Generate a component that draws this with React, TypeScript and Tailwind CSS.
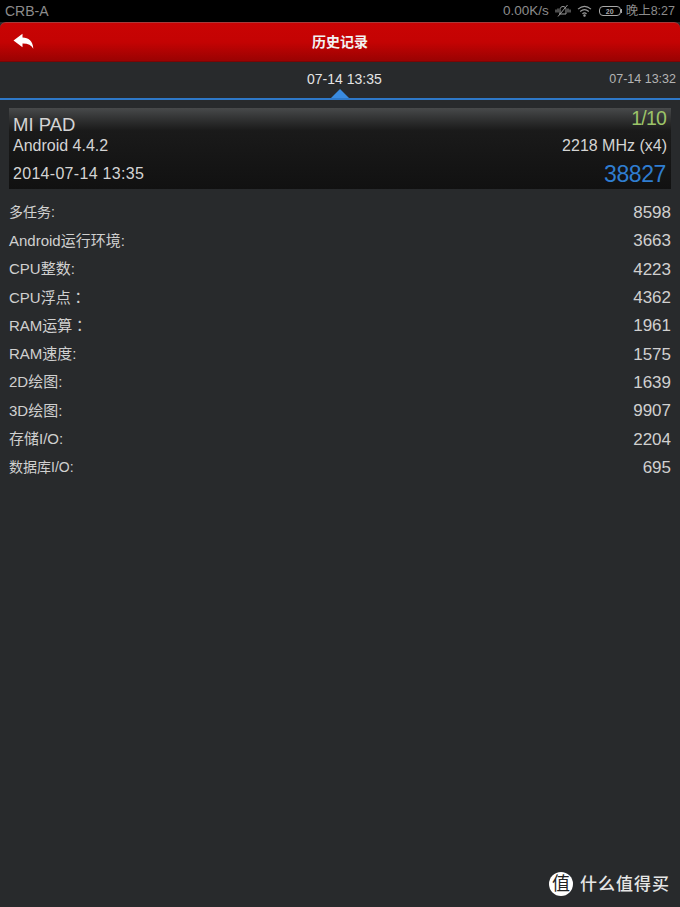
import { Fragment } from "react";

const font = "font-['Liberation_Sans','Noto_Sans_CJK_SC',sans-serif]";

const rows = [
  { label: "多任务:", value: "8598", small: true },
  { label: "Android运行环境:", value: "3663" },
  { label: "CPU整数:", value: "4223" },
  { label: "CPU浮点", value: "4362", colon: "：" },
  { label: "RAM运算", value: "1961", colon: "：" },
  { label: "RAM速度:", value: "1575" },
  { label: "2D绘图:", value: "1639" },
  { label: "3D绘图:", value: "9907" },
  { label: "存储I/O:", value: "2204" },
  { label: "数据库I/O:", value: "695", small: true },
];

function StatusIcons() {
  return (
    <div className="flex items-center">
      {/* muted */}
      <svg width="16" height="14" viewBox="0 0 16 14" fill="none" stroke="#9a9a9a" strokeWidth="1">
        <path d="M5 10V5.5C5 3.5 6.5 2.5 8 2.5s3 1 3 3V10H4" />
        <path d="M3 12.5L12.5 1" />
        <path d="M1 5.5v3M3 4.5v4M13 4.5v4M15 5.5v3" />
      </svg>
      {/* wifi */}
      <svg className="ml-[6px]" width="15" height="12" viewBox="0 0 15 12" fill="none" stroke="#9a9a9a" strokeWidth="1.1">
        <path d="M1 4.2C5 .8 10 .8 14 4.2" />
        <path d="M3.2 6.5c2.6-2.2 6-2.2 8.6 0" />
        <path d="M5.4 8.7c1.3-1 2.9-1 4.2 0" />
        <circle cx="7.5" cy="10.6" r=".7" fill="#9a9a9a" />
      </svg>
      {/* battery */}
      <div className="ml-[7px] flex items-center">
        <div className="flex h-[10px] w-[22px] items-center justify-center rounded-[4px] border border-[#a8a8a8] text-[7px] font-bold leading-none text-[#a8a8a8]">
          20
        </div>
        <div className="h-[4px] w-[1px] bg-[#a8a8a8]" />
      </div>
    </div>
  );
}

export default function App() {
  return (
    <div className={`relative flex h-[907px] w-[680px] flex-col overflow-hidden bg-[#282a2c] ${font}`}>
      {/* Status bar */}
      <div className="flex h-[22px] items-center justify-between bg-black pl-[5px] pr-[5px] text-[13.5px] text-[#8c8c8c]">
        <span className="text-[14px]">CRB-A</span>
        <div className="flex items-center">
          <span className="mr-[6px]">0.00K/s</span>
          <StatusIcons />
          <span className="ml-[4px] text-[12.5px]">晚上8:27</span>
        </div>
      </div>

      {/* Header */}
      <div className="relative flex h-[40px] items-center justify-center rounded-t-[6px] border-t border-b border-t-[#a83a3a] border-b-[#7a0505] bg-gradient-to-b from-[#c90404] via-[#c40303] to-[#9a0202]">
        <svg className="absolute left-[13px] top-[10px]" width="22" height="17" viewBox="0 0 22 17" fill="white">
          <path d="M0.5 7.5L9.5 0.8V4.6C15.5 4.6 20 8 20.3 15.8C18.5 12.2 15 10.4 9.5 10.5V14.2Z" />
        </svg>
        <span className="text-[14px] font-bold text-[#f2f2f2]">历史记录</span>
      </div>

      {/* Date tabs */}
      <div className="relative flex h-[38px] items-center border-b-2 border-[#2e78c8] pb-[1px]">
        <div className="flex-1 pl-[307px] text-[14px] text-[#e4e4e4]">07-14 13:35</div>
        <div className="pr-[4px] text-[12.5px] text-[#b4b4b4]">07-14 13:32</div>
        <div className="absolute bottom-0 left-[331px] h-0 w-0 border-x-[9px] border-b-[9px] border-x-transparent border-b-[#3a8be0]" />
      </div>

      {/* Summary card */}
      <div className="mx-[9px] mt-[8px] flex h-[81px] flex-col bg-gradient-to-b from-[#484a4b] via-[#1a1a1a] via-[28%] to-[#111111] pl-[4px] pr-[4px] text-[#d4d4d4]">
        <div className="flex h-[24px] items-start justify-between">
          <span className="mt-[7px] text-[18.5px] leading-[20px]">MI PAD</span>
          <span className="mr-[1px] mt-[-1px] text-[19.5px] leading-[22px] tracking-[-0.8px] text-[#9cc468]">1/10</span>
        </div>
        <div className="mt-[2px] flex h-[24px] items-center justify-between text-[16px]">
          <span>Android 4.4.2</span>
          <span>2218 MHz (x4)</span>
        </div>
        <div className="flex flex-1 items-center justify-between text-[16px]">
          <span className="tracking-[0.3px]">2014-07-14 13:35</span>
          <span className="mr-[1px] text-[23px] leading-[24px] tracking-[-0.4px] text-[#2f7dd0]">38827</span>
        </div>
      </div>

      {/* Scores */}
      <div className="mt-[9.5px] grid grid-cols-[1fr_auto] auto-rows-[28.35px] items-center px-[9px] text-[#d0d0d0]">
        {rows.map(({ label, value, colon, small }) => (
          <Fragment key={label}>
            <span className={small ? "text-[14px]" : "text-[15px]"}>
              {label}
              {colon && <span className="font-['Noto_Sans_CJK_TC',sans-serif]">{colon}</span>}
            </span>
            <span className="text-right text-[17px]">{value}</span>
          </Fragment>
        ))}
      </div>

      {/* Watermark */}
      <div className="absolute bottom-[10px] right-[10px] flex items-center gap-[7px]">
        <div className="flex h-[24px] w-[24px] items-center justify-center rounded-full bg-white text-[18px] leading-none text-[#222]">
          值
        </div>
        <span className="text-[17px] font-medium tracking-[1px] text-[#e6e6e6]">什么值得买</span>
      </div>
    </div>
  );
}
